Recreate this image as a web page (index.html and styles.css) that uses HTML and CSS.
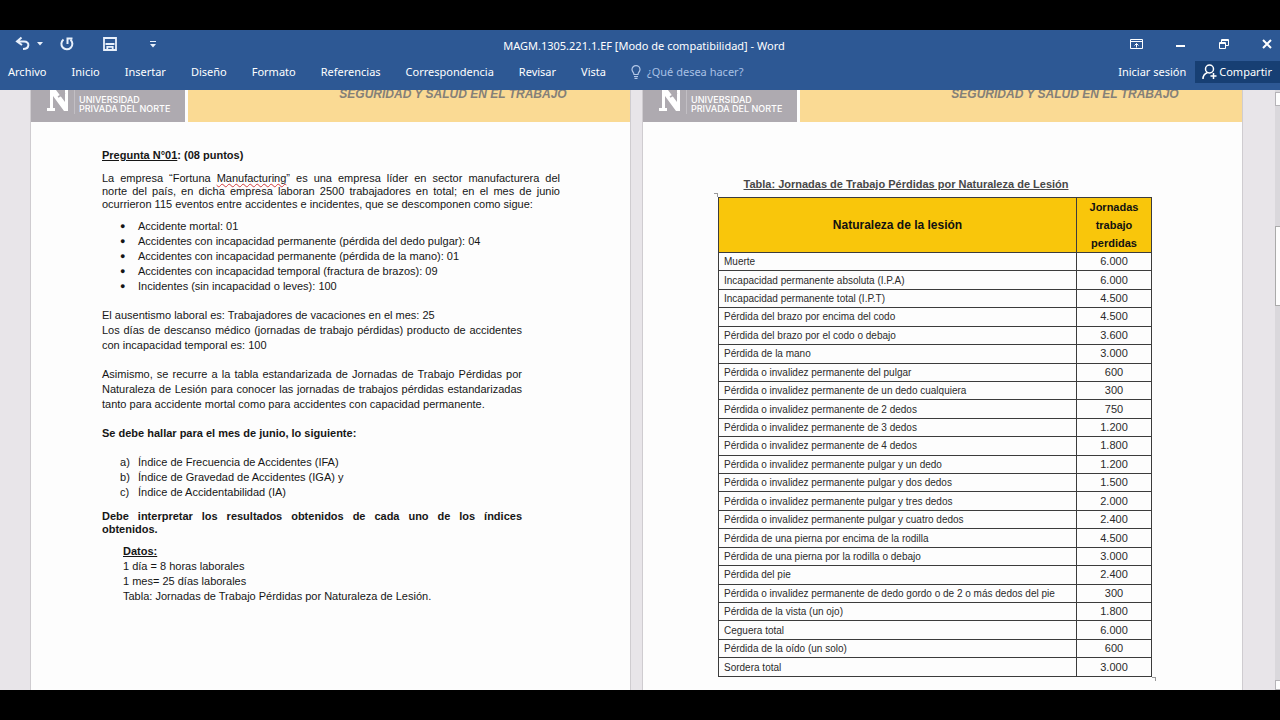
FILE: index.html
```html
<!DOCTYPE html>
<html lang="es">
<head>
<meta charset="utf-8">
<title>MAGM.1305.221.1.EF [Modo de compatibilidad] - Word</title>
<link rel="stylesheet" href="styles.css">
</head>
<body>
<div class="app">
  <header class="ribbon">
    <div class="titlebar">
      <div class="quick">
        <button class="icon-btn undo" aria-label="Deshacer"><svg width="16" height="16" viewBox="0 0 16 16" fill="none" stroke="#e8f0fb" stroke-width="2"><path d="M6.500 1.500L2 5.500l5 3.500M2.500 5.500h6.500c6.500 0 5.500 7.500-1 7.500"/></svg></button>
        <button class="icon-btn caret" aria-label="Opciones de deshacer"><svg width="6" height="4" viewBox="0 0 6 4" fill="#e8f0fb"><path d="M0 0h6L3 3.500z"/></svg></button>
        <button class="icon-btn redo" aria-label="Repetir"><svg width="16" height="16" viewBox="0 0 16 16" fill="none" stroke="#e8f0fb" stroke-width="2"><path d="M4.500 3.500A5.500 5.500 0 1 0 11.500 3.700M8.500 8V2.500h5"/></svg></button>
        <button class="icon-btn save" aria-label="Guardar"><svg width="14" height="14" viewBox="0 0 14 14" fill="none" stroke="#e8f0fb" stroke-width="1.800"><path d="M1 1h12v12H1zM2.500 7h9M4.300 13V9.800h5.400V13"/></svg></button>
        <button class="icon-btn" aria-label="Personalizar barra"><svg width="6" height="7" viewBox="0 0 6 7" fill="#e8f0fb"><path d="M0 0h6v1H0zM0 3h6L3 6.500z"/></svg></button>
      </div>
      <h1 class="title">MAGM.1305.221.1.EF [Modo de compatibilidad] - Word</h1>
      <div class="window-controls">
        <button class="icon-btn" aria-label="Opciones de cinta"><svg width="13" height="10" viewBox="0 0 13 10" fill="none" stroke="#fff"><path d="M.5.500h12v9H.5zM.5 2.500h12M6.500 8.500V4.500M4.500 6.500l2-2 2 2"/></svg></button>
        <button class="icon-btn" aria-label="Minimizar"><svg width="10" height="10" viewBox="0 0 10 10" fill="#fff"><path d="M0 6h9v2H0z"/></svg></button>
        <button class="icon-btn" aria-label="Restaurar"><svg width="10" height="10" viewBox="0 0 10 10" fill="none" stroke="#fff"><path d="M.5 3.500h6v6h-6zM.5 4.500h6M2.500 3V.500h7v6H7M2.500 1.500h7"/></svg></button>
        <button class="icon-btn" aria-label="Cerrar"><svg width="10" height="10" viewBox="0 0 10 10" stroke="#fff" stroke-width="2"><path d="M1 1l8 8M9 1L1 9"/></svg></button>
      </div>
    </div>
    <nav class="tabs">
      <button class="tab file">Archivo</button>
      <button class="tab">Inicio</button>
      <button class="tab">Insertar</button>
      <button class="tab">Diseño</button>
      <button class="tab">Formato</button>
      <button class="tab">Referencias</button>
      <button class="tab">Correspondencia</button>
      <button class="tab">Revisar</button>
      <button class="tab">Vista</button>
      <button class="tab tell"><svg width="10" height="14" viewBox="0 0 10 14" fill="none" stroke="#b4c8e8" stroke-width="1.200"><path d="M3 9.500C3 7.500 1 6.800 1 4.600a4 4 0 0 1 8 0C9 6.800 7 7.500 7 9.500zM3 11.500h4M3.500 13.300h3"/></svg>¿Qué desea hacer?</button>
      <button class="tab signin">Iniciar sesión</button>
      <button class="tab share"><svg width="15" height="16" viewBox="0 0 15 16" fill="none" stroke="#fff" stroke-width="1.500"><circle cx="7.500" cy="5" r="4"/><path d="M1 15c0-3.500 2-5.500 4.500-6.500M11.500 9v6M8.500 12h6"/></svg>Compartir</button>
    </nav>
  </header>

  <main class="workspace">
    <div class="pages">
      <article class="page">
        <div class="page-head">
          <div class="logo">
            <svg width="22" height="22" viewBox="0 0 22 22" fill="#fff"><path d="M3 0h6l9 12V0h3v21h-4L6 6v12h2v3H0v-3h3z"/><path d="M11 7l7-4" stroke="#aeaab0" stroke-width="1.500"/></svg>
            <p class="logo-text">UNIVERSIDAD<br>PRIVADA DEL NORTE</p>
          </div>
          <p class="course">SEGURIDAD Y SALUD EN EL TRABAJO</p>
        </div>
        <div class="text">
          <h2 class="question"><u>Pregunta N°01</u>: (08 puntos)</h2>
          <p class="intro"><span class="line">La empresa “Fortuna <span class="misspelt">Manufacturing</span>” es una empresa líder en sector manufacturera del</span> <span class="line">norte del país, en dicha empresa laboran 2500 trabajadores en total; en el mes de junio</span> ocurrieron 115 eventos entre accidentes e incidentes, que se descomponen como sigue:</p>
          <ul class="list">
            <li>Accidente mortal: 01</li>
            <li>Accidentes con incapacidad permanente (pérdida del dedo pulgar): 04</li>
            <li>Accidentes con incapacidad permanente (pérdida de la mano): 01</li>
            <li>Accidentes con incapacidad temporal (fractura de brazos): 09</li>
            <li>Incidentes (sin incapacidad o leves): 100</li>
          </ul>
          <div class="narrow">
            <p class="para">El ausentismo laboral es: Trabajadores de vacaciones en el mes: 25<br>Los días de descanso médico (jornadas de trabajo pérdidas) producto de accidentes con incapacidad temporal es: 100</p>
            <p class="para">Asimismo, se recurre a la tabla estandarizada de Jornadas de Trabajo Pérdidas por Naturaleza de Lesión para conocer las jornadas de trabajos pérdidas estandarizadas tanto para accidente mortal como para accidentes con capacidad permanente.</p>
            <p class="para strong">Se debe hallar para el mes de junio, lo siguiente:</p>
            <ol class="list letters">
              <li>Índice de Frecuencia de Accidentes (IFA)</li>
              <li>Índice de Gravedad de Accidentes (IGA) y</li>
              <li>Índice de Accidentabilidad (IA)</li>
            </ol>
            <p class="interpret strong"><span class="line">Debe interpretar los resultados obtenidos de cada uno de los índices</span> obtenidos.</p>
            <div class="data">
              <p class="strong"><u>Datos:</u></p>
              <p>1 día = 8 horas laborales</p>
              <p>1 mes= 25 días laborales</p>
              <p>Tabla: Jornadas de Trabajo Pérdidas por Naturaleza de Lesión.</p>
            </div>
          </div>
        </div>
      </article>

      <article class="page">
        <div class="page-head">
          <div class="logo">
            <svg width="22" height="22" viewBox="0 0 22 22" fill="#fff"><path d="M3 0h6l9 12V0h3v21h-4L6 6v12h2v3H0v-3h3z"/><path d="M11 7l7-4" stroke="#aeaab0" stroke-width="1.500"/></svg>
            <p class="logo-text">UNIVERSIDAD<br>PRIVADA DEL NORTE</p>
          </div>
          <p class="course">SEGURIDAD Y SALUD EN EL TRABAJO</p>
        </div>
        <div class="table-area">
          <table class="injuries">
            <caption>Tabla: Jornadas de Trabajo Pérdidas por Naturaleza de Lesión</caption>
            <thead><tr><th>Naturaleza de la lesión</th><th class="days">Jornadas trabajo perdidas</th></tr></thead>
            <tbody>
              <tr><td>Muerte</td><td>6.000</td></tr>
              <tr><td>Incapacidad permanente absoluta (I.P.A)</td><td>6.000</td></tr>
              <tr><td>Incapacidad permanente total (I.P.T)</td><td>4.500</td></tr>
              <tr><td>Pérdida del brazo por encima del codo</td><td>4.500</td></tr>
              <tr><td>Pérdida del brazo por el codo o debajo</td><td>3.600</td></tr>
              <tr><td>Pérdida de la mano</td><td>3.000</td></tr>
              <tr><td>Pérdida o invalidez permanente del pulgar</td><td>600</td></tr>
              <tr><td>Pérdida o invalidez permanente de un dedo cualquiera</td><td>300</td></tr>
              <tr><td>Pérdida o invalidez permanente de 2 dedos</td><td>750</td></tr>
              <tr><td>Pérdida o invalidez permanente de 3 dedos</td><td>1.200</td></tr>
              <tr><td>Pérdida o invalidez permanente de 4 dedos</td><td>1.800</td></tr>
              <tr><td>Pérdida o invalidez permanente pulgar y un dedo</td><td>1.200</td></tr>
              <tr><td>Pérdida o invalidez permanente pulgar y dos dedos</td><td>1.500</td></tr>
              <tr><td>Pérdida o invalidez permanente pulgar y tres dedos</td><td>2.000</td></tr>
              <tr><td>Pérdida o invalidez permanente pulgar y cuatro dedos</td><td>2.400</td></tr>
              <tr><td>Pérdida de una pierna por encima de la rodilla</td><td>4.500</td></tr>
              <tr><td>Pérdida de una pierna por la rodilla o debajo</td><td>3.000</td></tr>
              <tr><td>Pérdida del pie</td><td>2.400</td></tr>
              <tr><td>Pérdida o invalidez permanente de dedo gordo o de 2 o más dedos del pie</td><td>300</td></tr>
              <tr><td>Pérdida de la vista (un ojo)</td><td>1.800</td></tr>
              <tr><td>Ceguera total</td><td>6.000</td></tr>
              <tr><td>Pérdida de la oído (un solo)</td><td>600</td></tr>
              <tr><td>Sordera total</td><td>3.000</td></tr>
            </tbody>
          </table>
          <span class="corner start"></span>
          <span class="corner end"></span>
        </div>
      </article>
    </div>
    <div class="scrollbar">
      <button class="scroll-btn" aria-label="Subir"><svg width="8" height="5" viewBox="0 0 8 5" fill="none" stroke="#555"><path d="M1 4l3-3 3 3"/></svg></button>
      <div class="thumb"></div>
      <button class="scroll-btn down" aria-label="Bajar"><svg width="8" height="5" viewBox="0 0 8 5" fill="#555"><path d="M1 1h6L4 4z"/></svg></button>
    </div>
  </main>
</div>
</body>
</html>
```
FILE: styles.css
```css
* { box-sizing: border-box; }
body, h1, h2, p, ul, ol { margin: 0; padding: 0; }
body { background: #000; }
button { border: 0; padding: 0; background: none; color: inherit; font: inherit; }
svg { display: block; flex: none; }

.app { display: flex; flex-direction: column; height: 100vh; padding: 30px 0; }

/* Ribbon */
.ribbon {
  flex: none;
  height: 60px;
  background: #2d5894;
  color: #fff;
  font: 11px/16px "Noto Sans", "Open Sans", sans-serif;
}
.titlebar {
  display: grid;
  grid-template-columns: 1fr auto 1fr;
  align-items: center;
  height: 28px;
}
.quick { display: flex; align-items: center; padding-left: 15px; }
.undo { margin-right: 6px; }
.caret { margin-right: 16px; }
.redo { margin-right: 28px; }
.save { margin-right: 33px; }
.title { padding: 3px 0 0 8px; font-size: 11px; font-weight: 400; line-height: 16px; white-space: nowrap; }
.window-controls { display: flex; align-items: center; justify-content: flex-end; gap: 33px; padding-right: 8px; }
.tabs { display: flex; align-items: center; height: 28px; padding-left: 8px; }
.tab { display: flex; align-items: center; margin-right: 25px; white-space: nowrap; }
.tell { gap: 6px; color: #a9c0e4; }
.signin { margin: 0 9px 0 auto; }
.share { gap: 2px; height: 22px; margin: 0; padding: 0 8px 0 7px; background: #173f73; }

/* Workspace */
.workspace { flex: 1; display: flex; min-height: 0; overflow: hidden; background: #e8e5e9; }
.pages { flex: 1; display: grid; grid-template-columns: repeat(2, minmax(0, 1fr)); gap: 13px; padding: 0 33px 0 31px; }
.page {
  background: #fdfdfd;
  box-shadow: 0 0 0 1px #cfccd0;
  color: #161616;
  font: 11px/15px "Liberation Sans", Arial, sans-serif;
}
.page-head { display: flex; gap: 3px; height: 32px; overflow: hidden; }
.logo { display: flex; flex: none; width: 154px; gap: 5px; padding-left: 16px; background: #aeaab0; color: #fff; }
.logo-text { height: 24px; padding: 5px 0 0 4px; border-left: 1px solid #c2bfc4; font: 500 9px/9px Inter, "Open Sans", sans-serif; white-space: nowrap; }
.course {
  flex: 1;
  padding-left: 88px;
  background: #fada94;
  color: #858078;
  font-size: 12px;
  font-weight: 700;
  font-style: italic;
  line-height: 8px;
  text-align: center;
  white-space: nowrap;
}

.text { padding: 26px 70px 0 71px; }
.question { margin-bottom: 9px; font-size: 11px; line-height: 15px; }
.intro { margin-bottom: 8px; line-height: 13px; text-align: justify; }
.line { display: block; text-align: justify; text-align-last: justify; }
.misspelt { text-decoration: underline wavy #d23c3c 1px; text-decoration-skip-ink: none; }
.list { margin-bottom: 14px; padding-left: 36px; }
.list li { position: relative; list-style: none; }
.list li::before { content: "●"; position: absolute; left: -18px; font-size: 9px; }
.narrow { padding-right: 38px; }
.para { margin-bottom: 14px; text-align: justify; }
.strong { font-weight: 700; }
.letters { margin-bottom: 10px; counter-reset: letter; }
.letters li { counter-increment: letter; }
.letters li::before { content: counter(letter, lower-alpha) ")"; font-size: 11px; }
.interpret { margin-bottom: 8px; line-height: 13px; text-align: justify; }
.data { padding-left: 21px; white-space: nowrap; }

/* Injury table */
.table-area { position: relative; margin: 54px 90px 0 75px; }
.injuries { width: 100%; height: 480px; border-collapse: collapse; font-size: 10px; line-height: 17px; }
.injuries caption { padding: 0 58px 5px 0; color: #484848; font-size: 11px; font-weight: 700; line-height: 16px; text-decoration: underline; white-space: nowrap; }
.injuries th, .injuries td { padding: 0 5px; border: 1px solid #3c3c3c; }
.injuries th { background: #f9c60b; color: #111; font-size: 12px; line-height: 18px; }
.injuries .days { width: 75px; font-size: 11px; }
.injuries td { color: #2b2b2b; white-space: nowrap; }
.injuries td:last-child { font-size: 11px; text-align: center; }
.corner { position: absolute; width: 4px; height: 4px; border: solid #999; border-width: 1px 1px 0 0; }
.corner.start { left: -4px; top: 17px; }
.corner.end { right: -4px; bottom: -4px; }

/* Scrollbar */
.scrollbar { display: flex; flex: none; flex-direction: column; width: 5px; padding-top: 2px; overflow: hidden; background: #dad8dc; }
.scroll-btn { flex: none; width: 14px; height: 14px; padding-left: 3px; border: 1px solid #b5b3b7; background: #fdfdfd; }
.thumb { width: 14px; height: 80px; margin-top: 120px; border: 1px solid #aaa; background: #fdfdfd; }
.down { height: 10px; margin-top: auto; }
```
